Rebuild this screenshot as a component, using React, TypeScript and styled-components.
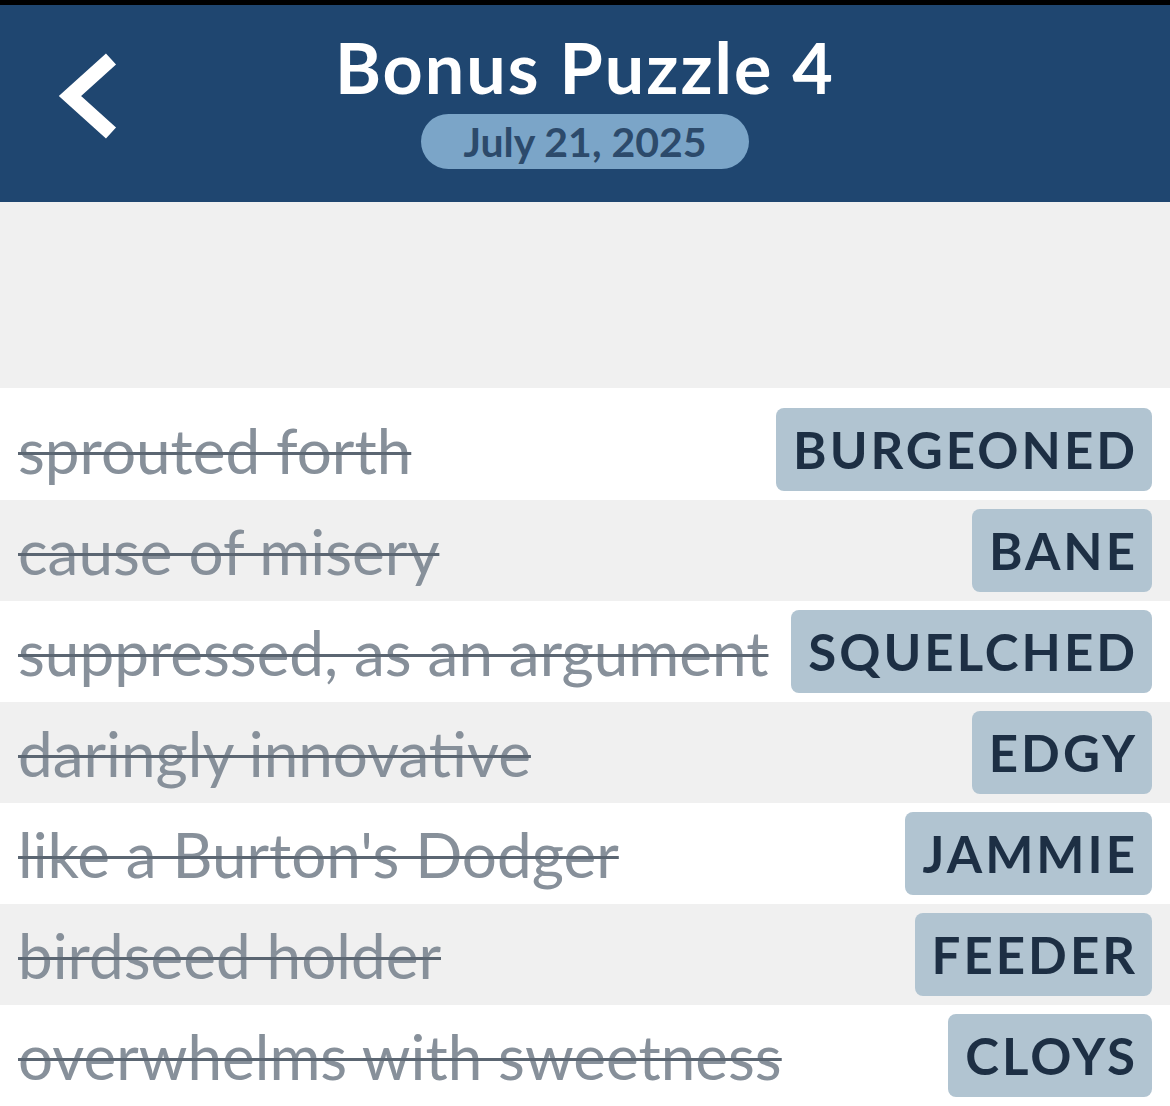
import styled, { createGlobalStyle } from 'styled-components';

const GlobalStyle = createGlobalStyle`
  body {
    margin: 0;
    background: #f0f0f0;
    font-family: Lato, "Open Sans", sans-serif;
  }
`;

const clues = [
  { clue: 'sprouted forth', answer: 'BURGEONED' },
  { clue: 'cause of misery', answer: 'BANE' },
  { clue: 'suppressed, as an argument', answer: 'SQUELCHED' },
  { clue: 'daringly innovative', answer: 'EDGY' },
  { clue: "like a Burton's Dodger", answer: 'JAMMIE' },
  { clue: 'birdseed holder', answer: 'FEEDER' },
  { clue: 'overwhelms with sweetness', answer: 'CLOYS' },
];

function App() {
  return (
    <Page>
      <GlobalStyle />
      <Header>
        <BackButton aria-label="Back">
          <svg width="70" height="92" viewBox="0 0 70 92">
            <polyline
              points="56,9 15,46 56,83"
              fill="none"
              stroke="#ffffff"
              strokeWidth="15"
              strokeLinejoin="miter"
            />
          </svg>
        </BackButton>
        <TitleBlock>
          <Title>Bonus Puzzle 4</Title>
          <DatePill>July 21, 2025</DatePill>
        </TitleBlock>
        <div />
      </Header>
      <Spacer />
      <List>
        {clues.map((item, i) => (
          <Row key={item.answer} $shaded={i % 2 === 1}>
            <Clue>{item.clue}</Clue>
            <Answer>{item.answer}</Answer>
          </Row>
        ))}
      </List>
    </Page>
  );
}

export default App;

const Page = styled.div`
  width: 1170px;
  height: 1106px;
  overflow: hidden;
  background: #f0f0f0;
`;

const Header = styled.header`
  box-sizing: border-box;
  height: 202px;
  border-top: 5px solid #000;
  background: #1f4670;
  display: grid;
  grid-template-columns: 160px 1fr 160px;
`;

const BackButton = styled.button`
  align-self: start;
  justify-self: start;
  margin: 45px 0 0 55px;
  padding: 0;
  border: none;
  background: none;
  display: flex;
`;

const TitleBlock = styled.div`
  display: flex;
  flex-direction: column;
  align-items: center;
`;

const Title = styled.h1`
  margin: 27px 0 0;
  font-size: 70px;
  line-height: 70px;
  font-weight: 700;
  letter-spacing: 2px;
  color: #ffffff;
  white-space: nowrap;
`;

const DatePill = styled.div`
  margin-top: 12px;
  height: 55px;
  padding: 0 42px;
  border-radius: 28px;
  background: #7ba5c8;
  color: #2c4a6b;
  font-size: 41px;
  line-height: 55px;
  font-weight: 700;
`;

const Spacer = styled.div`
  height: 186px;
`;

const List = styled.div`
  background: #ffffff;
  padding-top: 11px;
`;

const Row = styled.div<{ $shaded: boolean }>`
  box-sizing: border-box;
  height: 101px;
  padding: 0 18px;
  display: flex;
  align-items: center;
  justify-content: space-between;
  gap: 8px;
  background: ${(p) => (p.$shaded ? '#f0f0f0' : '#ffffff')};
`;

const Clue = styled.span`
  font-size: 62px;
  line-height: 76px;
  color: #87909a;
  white-space: nowrap;
  text-decoration: line-through;
  text-decoration-color: #5b6672;
  text-decoration-thickness: 3px;
`;

const Answer = styled.span`
  box-sizing: border-box;
  height: 83px;
  padding: 0 14px 0 17px;
  display: flex;
  align-items: center;
  border-radius: 8px;
  background: #b1c4d1;
  color: #1d2f44;
  font-size: 51px;
  font-weight: 700;
  letter-spacing: 3px;
  white-space: nowrap;
`;
